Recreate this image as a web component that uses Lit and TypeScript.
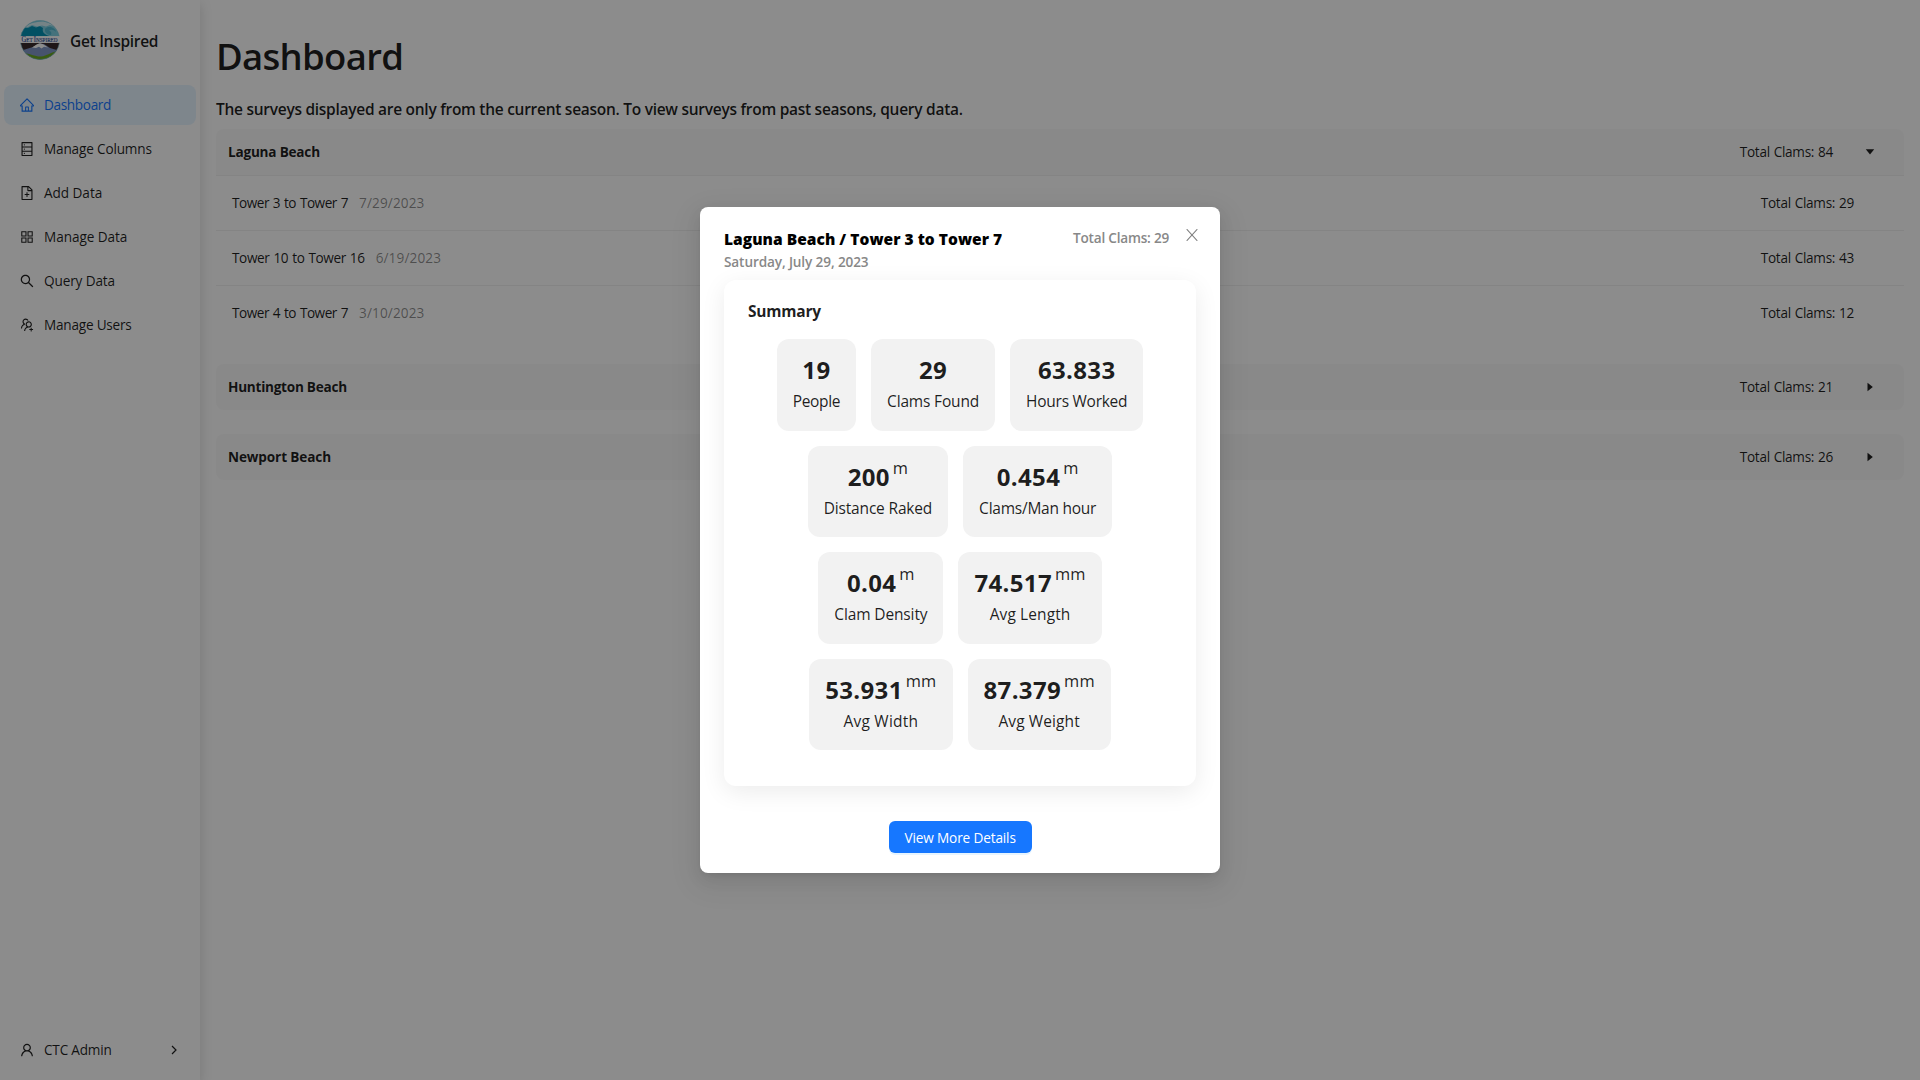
import { LitElement, html, css, svg, nothing } from "lit";
import { customElement, property } from "lit/decorators.js";
import { styleMap } from "lit/directives/style-map.js";

const ICONS: Record<string, string> = {
  home: "M946.5 505L560.1 118.8l-25.9-25.9a31.5 31.5 0 00-44.4 0L77.5 505a63.9 63.9 0 00-18.8 46c.4 35.2 29.7 63.3 64.9 63.3h42.5V940h691.8V614.3h43.4c17.1 0 33.2-6.7 45.3-18.8a63.6 63.6 0 0018.7-45.3c0-17-6.7-33.1-18.8-45.2zM568 868H456V664h112v204zm217.9-325.7V868H632V640c0-22.1-17.9-40-40-40H432c-22.1 0-40 17.9-40 40v228H238.1V542.3h-96l370-369.7 23.1 23.1L882 542.3h-96.1z",
  database: "M832 64H192c-17.7 0-32 14.3-32 32v832c0 17.7 14.3 32 32 32h640c17.7 0 32-14.3 32-32V96c0-17.7-14.3-32-32-32zm-600 72h560v208H232V136zm560 480H232V408h560v208zm0 272H232V680h560v208zM304 240a40 40 0 1080 0 40 40 0 10-80 0zm0 272a40 40 0 1080 0 40 40 0 10-80 0zm0 272a40 40 0 1080 0 40 40 0 10-80 0z",
  fileAdd: "M854.6 288.6L639.4 73.4c-6-6-14.1-9.4-22.6-9.4H192c-17.7 0-32 14.3-32 32v832c0 17.7 14.3 32 32 32h640c17.7 0 32-14.3 32-32V311.3c0-8.5-3.4-16.7-9.4-22.7zM790.2 326H602V137.8L790.2 326zm1.8 562H232V136h302v216a42 42 0 0042 42h216v494zM544 472c0-4.4-3.6-8-8-8h-48c-4.4 0-8 3.6-8 8v108H372c-4.4 0-8 3.6-8 8v48c0 4.4 3.6 8 8 8h108v108c0 4.4 3.6 8 8 8h48c4.4 0 8-3.6 8-8V644h108c4.4 0 8-3.6 8-8v-48c0-4.4-3.6-8-8-8H544V472z",
  appstore: "M464 144H160c-8.8 0-16 7.2-16 16v304c0 8.8 7.2 16 16 16h304c8.8 0 16-7.2 16-16V160c0-8.8-7.2-16-16-16zm-52 268H212V212h200v200zm452-268H560c-8.8 0-16 7.2-16 16v304c0 8.8 7.2 16 16 16h304c8.8 0 16-7.2 16-16V160c0-8.8-7.2-16-16-16zm-52 268H612V212h200v200zM464 544H160c-8.8 0-16 7.2-16 16v304c0 8.8 7.2 16 16 16h304c8.8 0 16-7.2 16-16V560c0-8.8-7.2-16-16-16zm-52 268H212V612h200v200zm452-268H560c-8.8 0-16 7.2-16 16v304c0 8.8 7.2 16 16 16h304c8.8 0 16-7.2 16-16V560c0-8.8-7.2-16-16-16zm-52 268H612V612h200v200z",
  search: "M909.6 854.5L649.9 594.8C690.2 542.7 712 479 712 412c0-80.2-31.3-155.4-87.9-212.1-56.6-56.7-132-87.9-212.1-87.9s-155.5 31.3-212.1 87.9C143.2 256.5 112 331.8 112 412c0 80.1 31.3 155.5 87.9 212.1C256.5 680.8 331.8 712 412 712c67 0 130.6-21.8 182.7-62l259.7 259.6a8.2 8.2 0 0011.6 0l43.6-43.5a8.2 8.2 0 000-11.6zM570.4 570.4C528 612.7 471.8 636 412 636s-116-23.3-158.4-65.6C211.3 528 188 471.8 188 412s23.3-116.1 65.6-158.4C296 211.3 352.2 188 412 188s116.1 23.2 158.4 65.6S636 352.2 636 412s-23.3 116.1-65.6 158.4z",
  userGroupAdd: "M892 772h-80v-80c0-4.4-3.6-8-8-8h-48c-4.4 0-8 3.6-8 8v80h-80c-4.4 0-8 3.6-8 8v48c0 4.4 3.6 8 8 8h80v80c0 4.4 3.6 8 8 8h48c4.4 0 8-3.6 8-8v-80h80c4.4 0 8-3.6 8-8v-48c0-4.4-3.6-8-8-8zM373.5 498.4c-.9-8.7-1.4-17.5-1.4-26.4 0-15.9 1.5-31.4 4.3-46.5.7-3.6-1.2-7.3-4.5-8.8-13.6-6.1-26.1-14.5-36.9-25.1a127.54 127.54 0 01-38.7-95.4c.9-32.1 13.8-62.6 36.3-85.6 24.7-25.3 57.9-39.1 93.2-38.7 31.9.3 62.7 12.6 86 34.4 7.9 7.4 14.7 15.6 20.4 24.4 2 3.1 5.9 4.4 9.3 3.2 17.6-6.1 36.2-10.4 55.3-12.4 5.6-.6 8.8-6.6 6.3-11.6-32.5-64.3-98.9-108.7-175.7-109.9-110.8-1.7-203.3 89.2-203.3 200 0 62.8 28.9 118.8 74.2 155.5-31.8 14.7-61.1 35-86.5 60.4-54.8 54.7-85.8 126.9-87.8 204a8 8 0 008 8.2h56.1c4.3 0 7.9-3.4 8-7.7 1.9-58 25.4-112.3 66.7-153.5 29.4-29.4 65.4-49.8 104.7-59.7 3.8-1 6.4-4.8 5.9-8.8zM824 472c0-109.4-87.9-198.3-196.9-200C516.3 270.3 424 361.2 424 472c0 62.8 29 118.8 74.2 155.5a300.95 300.95 0 00-86.4 60.4C357 742.6 326 814.8 324 891.8a8 8 0 008 8.2h56c4.3 0 7.9-3.4 8-7.7 1.9-58 25.4-112.3 66.7-153.5C505.8 695.7 563 672 624 672c110.4 0 200-89.5 200-200zm-109.5 90.5C690.3 586.7 658.2 600 624 600s-66.3-13.3-90.5-37.5a127.26 127.26 0 01-37.5-91.8c.3-32.8 13.4-64.5 36.3-88 24-24.6 56.1-38.3 90.4-38.7 33.9-.3 66.8 12.9 91 36.6 24.8 24.3 38.4 56.8 38.4 91.4-.1 34.2-13.4 66.3-37.6 90.5z",
  user: "M858.5 763.6a374 374 0 00-80.6-119.5 375.63 375.63 0 00-119.5-80.6c-.4-.2-.8-.3-1.2-.5C719.5 518 760 444.7 760 362c0-137-111-248-248-248S264 225 264 362c0 82.7 40.5 156 102.8 201.1-.4.2-.8.3-1.2.5-44.8 18.9-85 46-119.5 80.6a375.63 375.63 0 00-80.6 119.5A371.7 371.7 0 00136 901.8a8 8 0 008 8.2h60c4.4 0 7.9-3.5 8-7.8 2-77.2 33-149.5 87.8-204.3 56.7-56.7 132-87.9 212.2-87.9s155.5 31.2 212.2 87.9C779 752.7 810 825 812 902.2c.1 4.4 3.6 7.8 8 7.8h60a8 8 0 008-8.2c-1-47.8-10.9-94.3-29.5-138.2zM512 534c-45.9 0-89.1-17.9-121.6-50.4S340 407.9 340 362c0-45.9 17.9-89.1 50.4-121.6S466.1 190 512 190s89.1 17.9 121.6 50.4S684 316.1 684 362c0 45.9-17.9 89.1-50.4 121.6S557.9 534 512 534z",
};

const icon = (name: string) =>
  html`<svg class="icon" viewBox="64 64 896 896" fill="currentColor">${svg`<path d=${ICONS[name]}></path>`}</svg>`;

/* A label with its own letter tracking, in px. */
interface Label { text: string; track: number }
const tracked = ({ text, track }: Label, cls = "") =>
  html`<span class=${cls} style=${styleMap({ letterSpacing: `${track}px` })}>${text}</span>`;

interface NavItem extends Label { icon: string; active?: boolean }
const NAV: NavItem[] = [
  { text: "Dashboard", track: -0.35, icon: "home", active: true },
  { text: "Manage Columns", track: -0.17, icon: "database" },
  { text: "Add Data", track: -0.05, icon: "fileAdd" },
  { text: "Manage Data", track: -0.07, icon: "appstore" },
  { text: "Query Data", track: -0.13, icon: "search" },
  { text: "Manage Users", track: -0.22, icon: "userGroupAdd" },
];

interface Survey extends Label { date: string; clams: number }
interface Beach extends Label { clams: number; surveys: Survey[] }
const BEACHES: Beach[] = [
  {
    text: "Laguna Beach", track: -0.22, clams: 84,
    surveys: [
      { text: "Tower 3 to Tower 7", track: -0.48, date: "7/29/2023", clams: 29 },
      { text: "Tower 10 to Tower 16", track: -0.38, date: "6/19/2023", clams: 43 },
      { text: "Tower 4 to Tower 7", track: -0.48, date: "3/10/2023", clams: 12 },
    ],
  },
  { text: "Huntington Beach", track: -0.26, clams: 21, surveys: [] },
  { text: "Newport Beach", track: -0.13, clams: 26, surveys: [] },
];

interface Stat extends Label { value: string; unit?: string }
const STATS: Stat[][] = [
  [
    { value: "19", text: "People", track: -0.35 },
    { value: "29", text: "Clams Found", track: -0.17 },
    { value: "63.833", text: "Hours Worked", track: -0.26 },
  ],
  [
    { value: "200", unit: "m", text: "Distance Raked", track: -0.18 },
    { value: "0.454", unit: "m", text: "Clams/Man hour", track: -0.24 },
  ],
  [
    { value: "0.04", unit: "m", text: "Clam Density", track: -0.13 },
    { value: "74.517", unit: "mm", text: "Avg Length", track: 0.1 },
  ],
  [
    { value: "53.931", unit: "mm", text: "Avg Width", track: 0.2 },
    { value: "87.379", unit: "mm", text: "Avg Weight", track: 0.1 },
  ],
];

@customElement("brand-logo")
export class BrandLogo extends LitElement {
  static styles = css`
    :host { display: block; width: 40px; height: 40px; }
    svg { display: block; overflow: visible; }
    .word { font: 400 6px "Liberation Serif", serif; fill: #2f4f9a; stroke: #2f4f9a; stroke-width: 0.15px; }
    .cap { font-size: 7.6px; }
  `;
  render() {
    return html`<svg width="40" height="40" viewBox="0 0 40 40">
      <defs><clipPath id="disc"><circle cx="20" cy="20" r="19.6"></circle></clipPath></defs>
      <g clip-path="url(#disc)">
        <rect width="40" height="40" fill="#fff"></rect>
        <rect width="40" height="16.2" fill="#7fd0e2"></rect>
        <path d="M4 8C9 3 16 2 23 1.600L33 4 36 7 30 5 26 6.500 22 5.500 17 6.500 12 5 8 7Z" fill="#d6eff5"></path>
        <path d="M0 16.200V10L4 7.500 8 8 12 6 16 7.500 20 6.300 23 8C22 12 24 14 28 15.500L30 16.200Z" fill="#0593b4"></path>
        <path d="M25 9C28 5.500 35 7 36 12 34 9.500 31 9 29 10.500 31 11 32 13 31 15 27 15 24.500 12.500 25 9Z" fill="#4fb7d0"></path>
        <rect y="22.800" width="40" height="18" fill="#3a2a2c"></rect>
        <path d="M0 31L8 28.500 13 27 19 23.400 24 24 30 28 40 31V41H0Z" fill="#8197c6"></path>
        <path d="M12 27.500L17 24.200 20 23.200 23 24.200 28 27.500 24 26.800 21.500 28.500 19 26.800 16 28Z" fill="#fff"></path>
        <path d="M3 33C10 33.500 16 37 21 36.500 27 36 31 32 38 31V41H3Z" fill="#6ba81e"></path>
      </g>
      <circle cx="20" cy="20" r="19.500" fill="none" stroke="#7cc4d6" stroke-width=".8" opacity=".7"></circle>
      <rect x="0" y="16.200" width="40" height="6.600" fill="#fff"></rect>
      <text class="word" x="1.500" y="22" textLength="36" lengthAdjust="spacingAndGlyphs"><tspan class="cap">G</tspan>ET <tspan class="cap">I</tspan>NSPIRED</text>
    </svg>`;
  }
}

@customElement("side-nav")
export class SideNav extends LitElement {
  static styles = css`
    :host {
      display: flex; flex-direction: column; box-sizing: border-box;
      width: 200px; height: 100%; padding: 20px 4px 10px; background: #fff;
      box-shadow: 0 4px 12px rgba(0, 0, 0, 0.15);
      font-size: 13.6px; color: rgba(0, 0, 0, 0.88);
    }
    .brand { display: flex; align-items: center; gap: 10px; padding: 0 16px; height: 40px; margin-bottom: 25px; }
    .name { font-size: 15.5px; font-weight: 600; line-height: 22px; white-space: nowrap; padding-top: 2px; }
    .menu { display: flex; flex-direction: column; gap: 4px; flex: 1; }
    .item { display: flex; align-items: center; gap: 10px; height: 40px; padding: 0 16px; border-radius: 8px; line-height: 40px; white-space: nowrap; }
    .active { background: #e6f4ff; color: #1677ff; }
    .icon { width: 14px; height: 14px; flex: none; }
    .chevron { margin-left: auto; margin-right: 3px; }
  `;
  render() {
    return html`
      <div class="brand"><brand-logo></brand-logo>${tracked({ text: "Get Inspired", track: -0.29 }, "name")}</div>
      <nav class="menu">
        ${NAV.map((n) => html`<div class="item ${n.active ? "active" : ""}">${icon(n.icon)}${tracked(n)}</div>`)}
      </nav>
      <div class="item">
        ${icon("user")}${tracked({ text: "CTC Admin", track: -0.2 })}
        <svg class="chevron" width="6" height="10" viewBox="0 0 6 10" fill="none" stroke="currentColor" stroke-width="1.200"><path d="M1 1l4 4-4 4"></path></svg>
      </div>`;
  }
}

@customElement("beach-panel")
export class BeachPanel extends LitElement {
  @property({ attribute: false }) beach!: Beach;
  static styles = css`
    :host { display: block; font-size: 13.6px; line-height: 20px; color: rgba(0, 0, 0, 0.88); white-space: nowrap; }
    .head { display: flex; align-items: center; box-sizing: border-box; height: 46px; padding: 0 12px; border-radius: 8px; background: #fafafa; }
    .open { border-radius: 8px 8px 0 0; }
    .name { font-weight: 700; }
    .total { margin-left: auto; letter-spacing: -0.3px; word-spacing: 0.7px; }
    .caret { width: 10px; height: 10px; margin: 0 17px 0 32px; }
    .row { display: flex; align-items: center; box-sizing: border-box; height: 55px; padding: 0 50px 0 16px; border-top: 1px solid #f0f0f0; word-spacing: 0.8px; }
    .row span { padding-bottom: 1px; }
    .date { margin-left: 11px; color: rgba(0, 0, 0, 0.45); letter-spacing: 0.12px; }
  `;
  render() {
    const { clams, surveys } = this.beach;
    const open = surveys.length > 0;
    return html`
      <div class="head ${open ? "open" : ""}">
        ${tracked(this.beach, "name")}
        <span class="total">Total Clams: ${clams}</span>
        <svg class="caret" viewBox="0 0 10 10" fill="currentColor">
          ${open ? svg`<path d="M.8 2.300h8.400L5 7.600z"></path>` : svg`<path d="M2.500 .8v8.400L7.800 5z"></path>`}
        </svg>
      </div>
      ${surveys.map((s) => html`<div class="row">
        ${tracked(s)}<span class="date">${s.date}</span>
        <span class="total">Total Clams: ${s.clams}</span>
      </div>`)}`;
  }
}

@customElement("survey-modal")
export class SurveyModal extends LitElement {
  static styles = css`
    :host {
      display: flex; flex-direction: column; box-sizing: border-box; width: 520px; height: 666px;
      padding: 20px 24px; background: #fff; border-radius: 8px; white-space: nowrap;
      box-shadow: 0 6px 16px 0 rgba(0, 0, 0, 0.08), 0 3px 6px -4px rgba(0, 0, 0, 0.12), 0 9px 28px 8px rgba(0, 0, 0, 0.05);
      color: rgba(0, 0, 0, 0.88);
    }
    .head { display: flex; align-items: flex-start; height: 53px; font-size: 13.6px; font-weight: 600; line-height: 22px; color: #888; }
    .titles { display: flex; flex-direction: column; flex: 1; }
    .title { font-size: 15.5px; font-weight: 800; line-height: 24px; color: #000; }
    .close { width: 12px; height: 12px; margin: 2px -2px 0 17px; color: rgba(0, 0, 0, 0.5); }
    .card { height: 506px; box-sizing: border-box; padding: 20px 24px; border-radius: 12px; background: #fff; box-shadow: 0 6px 24px rgba(0, 0, 0, 0.08); }
    .summary { display: block; font-size: 15.5px; font-weight: 700; line-height: 22px; }
    .grid { display: flex; flex-direction: column; gap: 15px; margin-top: 17px; }
    .line { display: flex; justify-content: center; gap: 15px; }
    .stat { display: flex; flex-direction: column; align-items: center; box-sizing: border-box; height: 91.6px; padding: 12px 16px; border-radius: 12px; background: #f2f2f2; }
    .figure { display: flex; line-height: 38px; margin-bottom: 1px; }
    .value { font-size: 24px; font-weight: 700; letter-spacing: 0.35px; }
    .unit { font-size: 16.4px; line-height: 20px; letter-spacing: 0.2px; margin-left: 3px; }
    .label { font-size: 15.5px; line-height: 22px; }
    .button { align-self: center; box-sizing: border-box; margin-top: 35px; padding: 0 16px; width: 143px; height: 32px; line-height: 33px; text-align: center; border-radius: 6px; background: #1677ff; color: #fff; font-size: 13.6px; box-shadow: 0 2px 0 rgba(5, 145, 255, 0.1); }
  `;
  render() {
    return html`
      <header class="head">
        <div class="titles">
          ${tracked({ text: "Laguna Beach / Tower 3 to Tower 7", track: 0.03 }, "title")}
          ${tracked({ text: "Saturday, July 29, 2023", track: -0.12 })}
        </div>
        ${tracked({ text: "Total Clams: 29", track: -0.22 })}
        <svg class="close" viewBox="0 0 12 12" fill="none" stroke="currentColor" stroke-width="1.100"><path d="M.7 .2l10.600 11.600M11.300 .2L.7 11.800"></path></svg>
      </header>
      <section class="card">
        ${tracked({ text: "Summary", track: -0.2 }, "summary")}
        <div class="grid">
          ${STATS.map((line) => html`<div class="line">
            ${line.map((s) => html`<div class="stat">
              <div class="figure"><span class="value">${s.value}</span>${s.unit ? html`<span class="unit">${s.unit}</span>` : nothing}</div>
              ${tracked(s, "label")}
            </div>`)}
          </div>`)}
        </div>
      </section>
      <div class="button">${tracked({ text: "View More Details", track: -0.14 })}</div>`;
  }
}

@customElement("app-root")
export class AppRoot extends LitElement {
  static styles = css`
    :host { display: block; position: relative; width: 1920px; height: 1080px; overflow: hidden; background: #fff; font-family: "Open Sans", "Noto Sans", sans-serif; color: rgba(0, 0, 0, 0.88); }
    .page { display: flex; height: 100%; }
    .main { flex: 1; padding: 32px 16px 0; min-width: 0; }
    .heading { margin: 0; font-size: 36.5px; font-weight: 600; line-height: 48px; letter-spacing: -0.7px; }
    .note { margin: 18px 0 9px; font-size: 15.5px; font-weight: 600; line-height: 22px; letter-spacing: -0.275px; white-space: nowrap; }
    .panels { display: flex; flex-direction: column; gap: 24px; }
    .first { height: 211px; }
    .mask { position: absolute; inset: 0; display: flex; align-items: center; justify-content: center; background: rgba(0, 0, 0, 0.45); }
  `;
  render() {
    return html`
      <div class="page">
        <side-nav></side-nav>
        <main class="main">
          <h1 class="heading">Dashboard</h1>
          <p class="note">The surveys displayed are only from the current season. To view surveys from past seasons, query data.</p>
          <div class="panels">
            ${BEACHES.map((b, i) => html`<beach-panel class=${i === 0 ? "first" : ""} .beach=${b}></beach-panel>`)}
          </div>
        </main>
      </div>
      <div class="mask"><survey-modal></survey-modal></div>`;
  }
}
